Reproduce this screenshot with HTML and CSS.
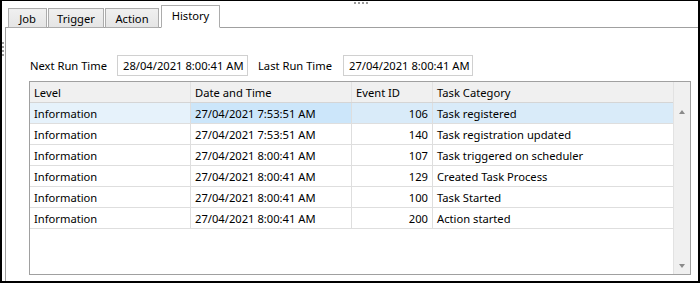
FILE: index.html
```html
<!DOCTYPE html>
<html>
<head>
<meta charset="UTF-8">
<title>Task History</title>
<link rel="stylesheet" href="styles.css">
</head>
<body>
<div class="frame">
<div class="grip grip-top"><i></i><i></i><i></i><i></i></div>
<div class="grip grip-left"><i></i><i></i><i></i><i></i></div>
<div class="tabs">
<div class="tab tab-job">Job</div>
<div class="tab tab-trigger">Trigger</div>
<div class="tab tab-action">Action</div>
<div class="tab active">History</div>
</div>
<div class="panel">
<div class="times">
<span class="lbl">Next Run Time</span>
<span class="box box1">28/04/2021 8:00:41 AM</span>
<span class="lbl lbl2">Last Run Time</span>
<span class="box box2">27/04/2021 8:00:41 AM</span>
</div>
<div class="grid">
<div class="grid-body">
<div class="row head"><div class="cell c-level">Level</div><div class="cell c-date">Date and Time</div><div class="cell c-id">Event ID</div><div class="cell c-cat">Task Category</div></div>
<div class="row sel"><div class="cell c-level first">Information</div><div class="cell c-date cur">27/04/2021 7:53:51 AM</div><div class="cell c-id num">106</div><div class="cell c-cat">Task registered</div></div>
<div class="row"><div class="cell c-level">Information</div><div class="cell c-date">27/04/2021 7:53:51 AM</div><div class="cell c-id num">140</div><div class="cell c-cat">Task registration updated</div></div>
<div class="row"><div class="cell c-level">Information</div><div class="cell c-date">27/04/2021 8:00:41 AM</div><div class="cell c-id num">107</div><div class="cell c-cat">Task triggered on scheduler</div></div>
<div class="row"><div class="cell c-level">Information</div><div class="cell c-date">27/04/2021 8:00:41 AM</div><div class="cell c-id num">129</div><div class="cell c-cat">Created Task Process</div></div>
<div class="row"><div class="cell c-level">Information</div><div class="cell c-date">27/04/2021 8:00:41 AM</div><div class="cell c-id num">100</div><div class="cell c-cat">Task Started</div></div>
<div class="row"><div class="cell c-level">Information</div><div class="cell c-date">27/04/2021 8:00:41 AM</div><div class="cell c-id num">200</div><div class="cell c-cat">Action started</div></div>
</div>
<div class="vscroll">
<div class="head-gap"></div>
<div class="arrow up"></div>
<div class="track"></div>
<div class="arrow down"></div>
</div>
</div>
</div>
</div>
</body>
</html>
```

FILE: styles.css
```css
body{margin:0;background:#fff;font-family:"Segoe UI","Noto Sans",Arial,sans-serif;font-size:11.2px;color:#000;}
.frame{position:relative;width:700px;height:283px;box-sizing:border-box;border:2px solid #000;border-top-width:1px;background:#fff;display:flex;flex-direction:column;overflow:hidden;}
.grip{position:absolute;display:flex;gap:2px;}
.grip i{display:block;width:2px;height:2px;background:#9a9a9a;}
.grip-top{top:1px;left:352px;}
.grip-left{left:0;top:41px;flex-direction:column;}
.tabs{display:flex;align-items:flex-end;padding:4px 0 0 6px;height:23px;box-sizing:content-box;position:relative;z-index:1;margin-bottom:-1px;}
.tab{box-sizing:border-box;height:20px;border:1px solid #acacac;background:linear-gradient(#f0f0f0,#e5e5e5);text-align:center;line-height:19px;margin-right:1px;}
.tab-job{width:39px;}
.tab-trigger{width:56px;}
.tab-action{width:54px;margin-right:2px;}
.tab.active{height:23px;width:59px;background:#fff;border-bottom-color:#fff;line-height:20px;}
.panel{flex:1;margin-left:3px;border-top:1px solid #a0a0a0;border-left:1px solid #a0a0a0;padding:27px 7px 0 23px;}
.times{display:flex;align-items:center;height:21px;white-space:nowrap;}
.lbl{width:87px;margin-left:1px;}
.lbl2{width:85px;margin-left:10px;}
.box{box-sizing:border-box;height:21px;border:1px solid #d0d0d0;padding:0 0 0 5px;line-height:19px;overflow:hidden;}
.box1{width:131px;}
.box2{width:130px;}
.grid{margin-top:5px;height:194px;box-sizing:border-box;border:1px solid #a0a0a0;display:flex;}
.grid-body{flex:1;}
.row{display:flex;height:21px;box-sizing:border-box;border-bottom:1px solid #dedede;}
.cell{box-sizing:border-box;padding:1px 4px 0;line-height:19px;border-right:1px solid #dedede;white-space:nowrap;overflow:hidden;}
.c-level{width:161px;}
.c-date{width:161px;}
.c-id{width:81px;}
.c-cat{flex:1;border-right:none;}
.head{background:#f0f0f0;border-bottom-color:#d5d5d5;}
.head .cell{border-right-color:#e2e2e2;}
.num{text-align:right;}
.sel .cell{background:#d9ebf9;}
.sel .first{background:#e6f2fb;}
.sel .cur{background:#cce6fa;}
.vscroll{width:16px;background:#f0f0f0;border-left:1px solid #e2e2e2;display:flex;flex-direction:column;}
.head-gap{height:21px;}
.arrow{height:17px;display:flex;align-items:center;justify-content:center;}
.arrow.up::after{content:"";border:3px solid transparent;border-bottom:4px solid #8a8a8a;border-top:none;}
.arrow.down::after{content:"";border:3px solid transparent;border-top:4px solid #8a8a8a;border-bottom:none;}
.track{flex:1;}
```
